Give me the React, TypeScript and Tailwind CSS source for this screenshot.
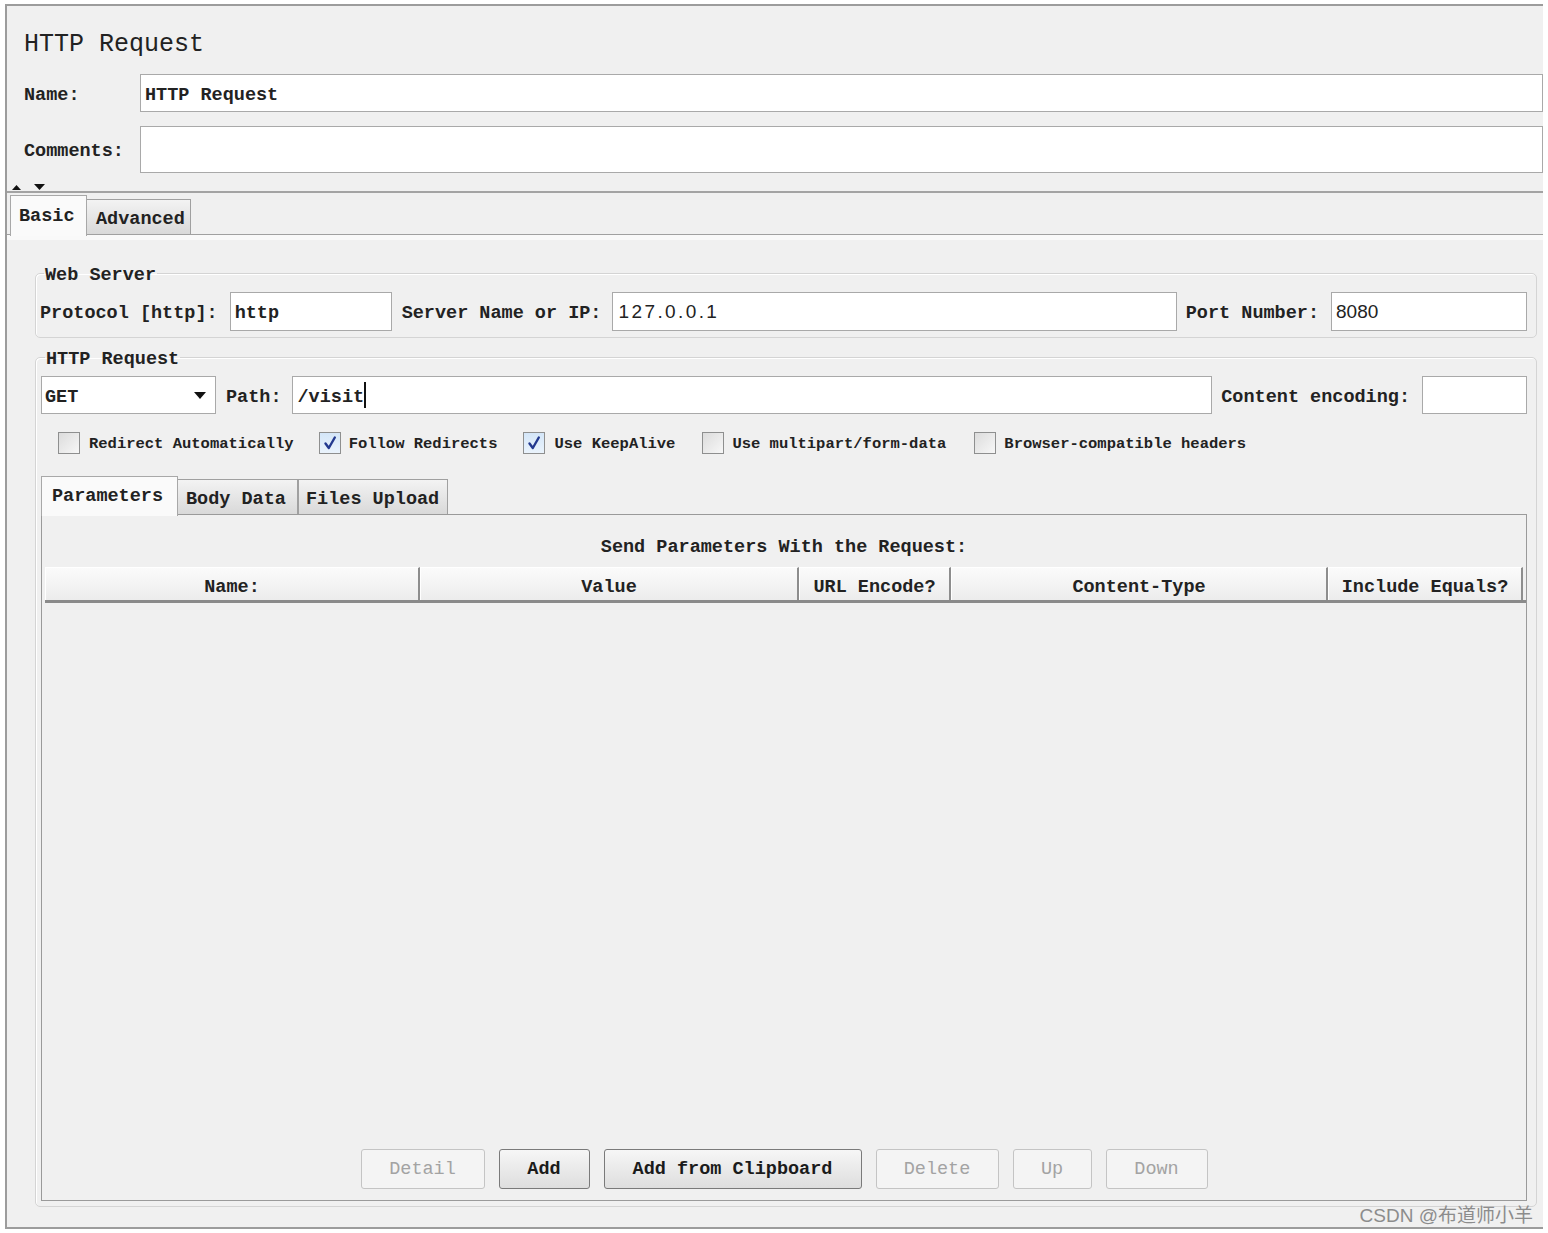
import React from "react";

const Check = ({ checked, className }: { checked?: boolean; className?: string }) => (
  <div
    className={
      "w-[22px] h-[22px] border border-[#8e8f8f] flex items-center justify-center " +
      (checked
        ? "bg-gradient-to-b from-[#d4e6f8] to-[#eaf3fc]"
        : "bg-gradient-to-br from-[#dcdcdc] to-[#f7f7f7]") +
      " " +
      (className || "")
    }
  >
    {checked && (
      <svg width="16" height="16" viewBox="0 0 16 16">
        <path d="M3.5 8.5 L6.8 13 L12.8 2.5" fill="none" stroke="#23398f" strokeWidth="2.4" strokeLinejoin="round" strokeLinecap="round" />
      </svg>
    )}
  </div>
);

const Btn = ({ label, enabled, w }: { label: string; enabled?: boolean; w: string }) => (
  <div
    className={
      "h-[40px] pt-[2px] rounded-[3px] border flex items-center justify-center text-[18.5px] " +
      w +
      " " +
      (enabled
        ? "border-[#7a7a7a] bg-gradient-to-b from-[#f6f6f6] to-[#dedede] text-[#1b1b1b] font-bold"
        : "border-[#c4c4c4] bg-[#f4f4f4] text-[#a3a3a3]")
    }
  >
    {label}
  </div>
);

const Head = ({ label, w }: { label: string; w: string }) => (
  <div
    className={
      "h-full pt-[7px] flex items-center justify-center border-r-2 border-r-[#8d8d8d] border-t border-t-white border-l border-l-white bg-gradient-to-b from-[#fbfbfb] to-[#ececec] font-bold text-[18.5px] " +
      w
    }
  >
    {label}
  </div>
);

export default function App() {
  return (
    <div className="w-[1548px] h-[1233px] bg-white relative font-['Liberation_Mono',monospace] text-[#222]">
      <div className="ml-[5px] mt-[4px] w-[1538px] h-[1225px] bg-[#f0f0f0] border-l-2 border-t-2 border-b-2 border-[#9c9c9c] flex flex-col">
        {/* header section */}
        <div className="pl-[17px] flex flex-col">
          <div className="mt-[20px] h-[34px] pt-[4px] leading-[30px] text-[25px]">HTTP Request</div>
          <div className="mt-[14px] h-[38px] flex items-center">
            <div className="w-[116px] pt-[5px] text-[18.5px] font-bold">Name:</div>
            <div className="flex-1 h-full bg-white border border-[#a9a9a9] flex items-center pl-[4px] pt-[5px] text-[18.5px] font-bold">
              HTTP Request
            </div>
          </div>
          <div className="mt-[14px] h-[47px] flex items-center">
            <div className="w-[116px] pt-[5px] text-[18.5px] font-bold">Comments:</div>
            <div className="flex-1 h-full bg-white border border-[#a9a9a9]" />
          </div>
        </div>
        <div className="mt-[8px] h-[10px] flex items-end pl-[5px] pb-[1px] gap-[13px]">
          <svg width="9" height="5" viewBox="0 0 9 5"><path d="M0 5 L4.5 0 L9 5 Z" fill="#111" /></svg>
          <svg width="11" height="6" viewBox="0 0 11 6"><path d="M0 0 L11 0 L5.5 6 Z" fill="#111" /></svg>
        </div>
        <div className="border-t-2 border-[#a3a3a3]" />
        {/* main tabs */}
        <div className="h-[42px] flex items-end pl-[3px] border-b border-[#a0a0a0]">
          <div className="relative z-10 -mb-[2px] w-[77px] h-[41px] pt-[2px] bg-[#fafafa] border-t border-l border-r border-[#a8a8a8] flex items-center pl-[8px] text-[18.5px] font-bold">
            Basic
          </div>
          <div className="w-[104px] h-[35px] pt-[5px] bg-gradient-to-b from-[#f3f3f3] to-[#d9d9d9] border-t border-r border-[#a0a0a0] flex items-center pl-[9px] text-[18.5px] font-bold">
            Advanced
          </div>
        </div>
        <div className="flex-1 border-t-[5px] border-[#f9f9f9] flex flex-col">
          {/* Web Server */}
          <fieldset className="mt-[22px] ml-[28px] mr-[6px] border border-[#d4d4d4] rounded-[5px] shadow-[inset_1px_1px_0_#fff] pt-[8px] pb-[6px] pl-[4px] pr-[9px]">
            <legend className="ml-[4px] px-[1px] h-[22px] pt-[6px] leading-[16px] text-[18.5px] font-bold">Web Server</legend>
            <div className="h-[39px] flex items-center">
              <div className="pt-[5px] text-[18.5px] font-bold">Protocol [http]:</div>
              <div className="ml-[12px] w-[162px] h-full bg-white border border-[#a9a9a9] flex items-center pl-[4px] pt-[5px] text-[18.5px] font-bold">http</div>
              <div className="ml-[10px] pt-[5px] text-[18.5px] font-bold">Server Name or IP:</div>
              <div className="ml-[11px] flex-1 h-full bg-white border border-[#a9a9a9] flex items-center pl-[5px] pt-[2px] text-[19px] tracking-[2.4px] font-['Liberation_Sans',sans-serif]">127.0.0.1</div>
              <div className="ml-[9px] pt-[5px] text-[18.5px] font-bold">Port Number:</div>
              <div className="ml-[12px] w-[196px] h-full bg-white border border-[#a9a9a9] flex items-center pl-[4px] pt-[2px] text-[19px] font-['Liberation_Sans',sans-serif]">8080</div>
            </div>
          </fieldset>
          {/* HTTP Request */}
          <fieldset className="mt-[8px] ml-[28px] mr-[6px] border border-[#d4d4d4] rounded-[5px] shadow-[inset_1px_1px_0_#fff] pt-[8px] pb-[5px] pl-[5px] pr-[9px]">
            <legend className="ml-[4px] px-[1px] h-[22px] pt-[6px] leading-[16px] text-[18.5px] font-bold">HTTP Request</legend>
            <div className="h-[38px] flex items-center">
              <div className="w-[175px] h-full bg-white border border-[#a9a9a9] flex items-center justify-between pl-[3px] pr-[9px] text-[18.5px] font-bold">
                <span className="pt-[5px]">GET</span>
                <svg width="12" height="7" viewBox="0 0 12 7"><path d="M0 0 L12 0 L6 7 Z" fill="#111" /></svg>
              </div>
              <div className="ml-[10px] pt-[5px] text-[18.5px] font-bold">Path:</div>
              <div className="ml-[10px] flex-1 h-full bg-white border border-[#a9a9a9] flex items-center pl-[5px] text-[18.5px] font-bold">
                <span className="pt-[5px]">/visit</span>
                <span className="w-[2px] h-[26px] bg-[#111]" />
              </div>
              <div className="ml-[9px] pt-[5px] text-[18.5px] font-bold">Content encoding:</div>
              <div className="ml-[12px] w-[105px] h-full bg-white border border-[#a9a9a9]" />
            </div>
            <div className="mt-[18px] h-[22px] flex items-center text-[15.5px] font-bold">
              <Check className="ml-[17px]" />
              <span className="ml-[9px] pt-[4px]">Redirect Automatically</span>
              <Check checked className="ml-[25px]" />
              <span className="ml-[8px] pt-[4px]">Follow Redirects</span>
              <Check checked className="ml-[26px]" />
              <span className="ml-[9px] pt-[4px]">Use KeepAlive</span>
              <Check className="ml-[27px]" />
              <span className="ml-[8px] pt-[4px]">Use multipart/form-data</span>
              <Check className="ml-[28px]" />
              <span className="ml-[8px] pt-[4px]">Browser-compatible headers</span>
            </div>
            {/* param tabs */}
            <div className="mt-[22px] h-[38px] flex items-end">
              <div className="relative z-10 -mb-[2px] w-[137px] h-[40px] pt-[1px] bg-[#fafafa] border-t border-l border-r border-[#a8a8a8] flex items-center pl-[10px] text-[18.5px] font-bold">
                Parameters
              </div>
              <div className="w-[120px] h-[35px] pt-[5px] bg-gradient-to-b from-[#f3f3f3] to-[#d9d9d9] border-t border-r border-[#a0a0a0] flex items-center pl-[8px] text-[18.5px] font-bold">
                Body Data
              </div>
              <div className="w-[150px] h-[35px] pt-[5px] bg-gradient-to-b from-[#f3f3f3] to-[#d9d9d9] border-t border-r border-l border-[#a0a0a0] flex items-center pl-[7px] text-[18.5px] font-bold">
                Files Upload
              </div>
            </div>
            <div className="h-[687px] border border-[#9a9a9a] flex flex-col">
              <div className="h-[52px] pt-[13px] flex items-center justify-center text-[18.5px] font-bold">
                Send Parameters With the Request:
              </div>
              <div className="ml-[3px] h-[36px] flex border-b-[3px] border-[#8a8a8a]">
                <Head label="Name:" w="w-[375px]" />
                <Head label="Value" w="w-[379px]" />
                <Head label="URL Encode?" w="w-[152px]" />
                <Head label="Content-Type" w="w-[377px]" />
                <Head label="Include Equals?" w="w-[195px]" />
              </div>
              <div className="flex-1" />
              <div className="pb-[11px] flex justify-center gap-[14px]">
                <Btn label="Detail" w="w-[124px]" />
                <Btn label="Add" enabled w="w-[91px]" />
                <Btn label="Add from Clipboard" enabled w="w-[258px]" />
                <Btn label="Delete" w="w-[123px]" />
                <Btn label="Up" w="w-[79px]" />
                <Btn label="Down" w="w-[102px]" />
              </div>
            </div>
          </fieldset>
        </div>
      </div>
      <div className="absolute right-[15px] bottom-[10px] h-[22px] leading-[22px] text-[19px] text-[#8c8c8c] font-['Liberation_Sans','Noto_Sans_CJK_SC',sans-serif]">
        CSDN @布道师小羊
      </div>
    </div>
  );
}
